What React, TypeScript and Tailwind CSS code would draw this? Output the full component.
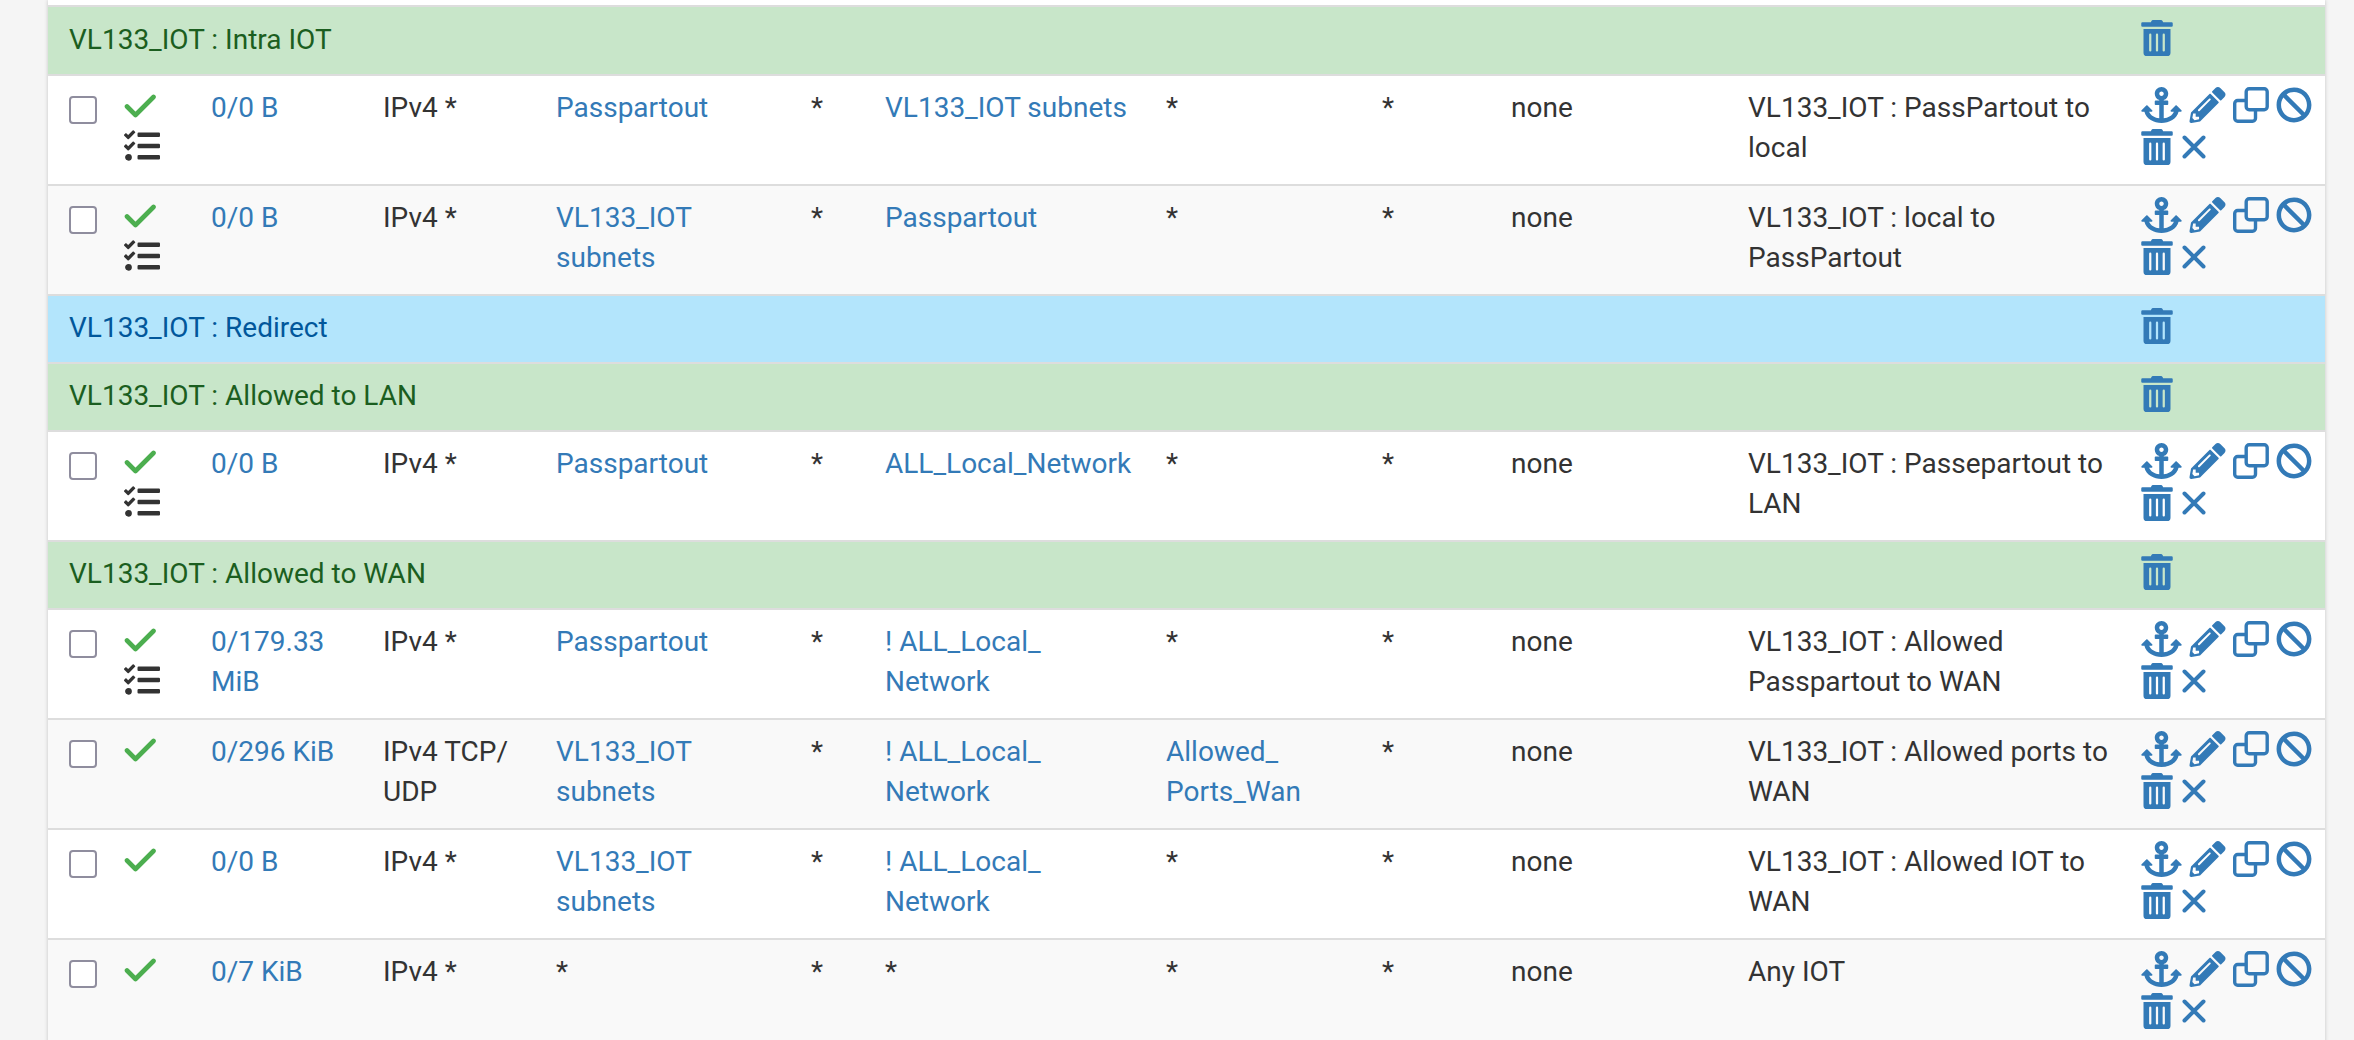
import React from 'react';
import { FaAnchor, FaBan, FaPencilAlt, FaTasks, FaTrashAlt } from 'react-icons/fa';

type Rule = {
  states: string;
  proto: string;
  source: string;
  port?: string;
  dest: string;
  dport?: string;
  desc: string;
  logged?: boolean;
  striped?: boolean;
};

type Row = { separator: string; tone: 'green' | 'blue' } | { rule: Rule };

const rows: Row[] = [
  { separator: 'VL133_IOT : Intra IOT', tone: 'green' },
  { rule: { states: '0/0 B', proto: 'IPv4 *', source: 'Passpartout', dest: 'VL133_IOT subnets', desc: 'VL133_IOT : PassPartout to local', logged: true } },
  { rule: { states: '0/0 B', proto: 'IPv4 *', source: 'VL133_IOT subnets', dest: 'Passpartout', desc: 'VL133_IOT : local to PassPartout', logged: true, striped: true } },
  { separator: 'VL133_IOT : Redirect', tone: 'blue' },
  { separator: 'VL133_IOT : Allowed to LAN', tone: 'green' },
  { rule: { states: '0/0 B', proto: 'IPv4 *', source: 'Passpartout', dest: 'ALL_Local_Network', desc: 'VL133_IOT : Passepartout to LAN', logged: true } },
  { separator: 'VL133_IOT : Allowed to WAN', tone: 'green' },
  { rule: { states: '0/179.33 MiB', proto: 'IPv4 *', source: 'Passpartout', dest: '! ALL_Local_\nNetwork', desc: 'VL133_IOT : Allowed Passpartout to WAN', logged: true } },
  { rule: { states: '0/296 KiB', proto: 'IPv4 TCP/\nUDP', source: 'VL133_IOT subnets', dest: '! ALL_Local_\nNetwork', dport: 'Allowed_\nPorts_Wan', desc: 'VL133_IOT : Allowed ports to WAN', striped: true } },
  { rule: { states: '0/0 B', proto: 'IPv4 *', source: 'VL133_IOT subnets', dest: '! ALL_Local_\nNetwork', desc: 'VL133_IOT : Allowed IOT to WAN' } },
  { rule: { states: '0/7 KiB', proto: 'IPv4 *', source: '*', dest: '*', desc: 'Any IOT', striped: true } },
];

const CheckMark = () => (
  <svg viewBox="0 0 32 24" className="h-[24px] w-[32px]" fill="none" stroke="#4cae4f" strokeWidth="4.6" strokeLinecap="round" strokeLinejoin="round">
    <path d="M3 12.5 L11.5 21 L29.5 3" />
  </svg>
);

const CloseMark = () => (
  <svg viewBox="0 0 24 24" className="ml-[2px] h-[36px] w-[24px]" fill="none" stroke="#337ab7" strokeWidth="4" strokeLinecap="round">
    <path d="M2.5 2.5 L21.5 21.5 M21.5 2.5 L2.5 21.5" />
  </svg>
);

const CloneMark = () => (
  <svg viewBox="0 0 36 36" className="h-[36px] w-[36px]" fill="none" stroke="#337ab7" strokeWidth="3.4" strokeLinejoin="round">
    <rect x="13.2" y="1.7" width="21" height="21" rx="3" />
    <path d="M13.2 13.5 H4.7 a3 3 0 0 0 -3 3 V31.3 a3 3 0 0 0 3 3 H19.5 a3 3 0 0 0 3 -3 V22.7" />
  </svg>
);

function Cell({ text, link }: { text?: string; link?: boolean }) {
  if (!text) return <td />;
  const isLink = link && text !== '*';
  return <td className={`whitespace-pre-line pr-[15px] pt-[12px] align-top ${isLink ? 'text-[#337ab7]' : ''}`}>{text}</td>;
}

function RuleRow({ rule }: { rule: Rule }) {
  return (
    <tr className={`h-[110px] border-b-2 border-[#ddd] ${rule.striped ? 'bg-[#f9f9f9]' : 'bg-white'}`}>
      <td className="pl-[21px] pt-[20px] align-top">
        <div className="h-[28px] w-[28px] rounded-[4px] border-2 border-[#8f8d9e] bg-white" />
      </td>
      <td className="pt-[18px] align-top">
        <CheckMark />
        {rule.logged && <FaTasks className="mt-[10px] text-[36px] text-[#333]" />}
      </td>
      <Cell text={rule.states} link />
      <Cell text={rule.proto} />
      <Cell text={rule.source} link />
      <Cell text="*" />
      <Cell text={rule.dest} link />
      <Cell text={rule.dport ?? '*'} link />
      <Cell text="*" />
      <Cell text="none" />
      <Cell text={rule.desc} />
      <td className="pt-[11px] align-top">
        <div className="flex w-[180px] flex-wrap gap-x-[7px] gap-y-[6px] text-[36px] text-[#337ab7]">
          <FaAnchor className="h-[36px] w-[41px]" />
          <FaPencilAlt className="h-[36px] w-[37px]" />
          <CloneMark />
          <FaBan />
          <FaTrashAlt className="h-[36px] w-[32px]" />
          <CloseMark />
        </div>
      </td>
    </tr>
  );
}

function SeparatorRow({ label, tone }: { label: string; tone: 'green' | 'blue' }) {
  const colors = tone === 'green' ? 'bg-[#c8e6c9] text-[#1b5e20]' : 'bg-[#b3e5fc] text-[#01579b]';
  return (
    <tr className={`h-[68px] border-b-2 border-[#ddd] ${colors}`}>
      <td colSpan={11} className="pb-[2px] pl-[21px]">{label}</td>
      <td className="pb-[6px]">
        <FaTrashAlt className="h-[36px] w-[32px] text-[#337ab7]" />
      </td>
    </tr>
  );
}

export default function App() {
  return (
    <div className="h-[1040px] overflow-hidden bg-[#f5f5f5] font-['Roboto',sans-serif] text-[28px] leading-[40px] text-[#333]">
      <div className="ml-[48px] mr-[29px] bg-white shadow-[0_0_4px_rgba(0,0,0,0.2)]">
        <div className="h-[7px] border-b-2 border-[#ddd]" />
        <table className="w-full table-fixed border-collapse">
          <colgroup>
            <col className="w-[76px]" />
            <col className="w-[87px]" />
            <col className="w-[172px]" />
            <col className="w-[173px]" />
            <col className="w-[255px]" />
            <col className="w-[74px]" />
            <col className="w-[281px]" />
            <col className="w-[216px]" />
            <col className="w-[129px]" />
            <col className="w-[237px]" />
            <col className="w-[393px]" />
            <col />
          </colgroup>
          <tbody>
            {rows.map((row, i) =>
              'rule' in row ? (
                <RuleRow key={i} rule={row.rule} />
              ) : (
                <SeparatorRow key={i} label={row.separator} tone={row.tone} />
              ),
            )}
          </tbody>
        </table>
      </div>
    </div>
  );
}
